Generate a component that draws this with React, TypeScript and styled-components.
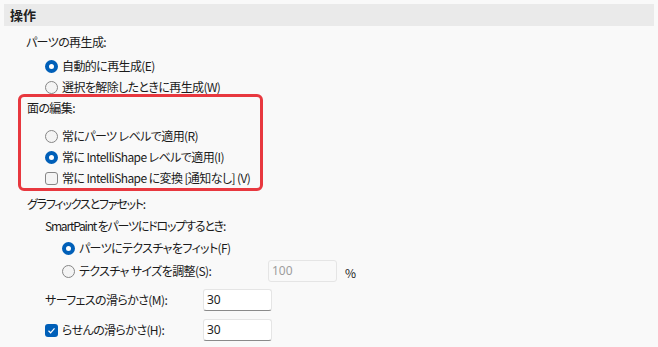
import React from 'react';
import styled, { createGlobalStyle } from 'styled-components';

const GlobalStyle = createGlobalStyle`
  html, body {
    margin: 0;
    padding: 0;
    background: #f9f9f9;
  }
  body {
    font-family: "Noto Sans CJK JP", "Noto Sans", sans-serif;
    font-size: 12px;
    color: #1b1b1b;
    font-feature-settings: "palt";
  }
`;

const Page = styled.div`
  width: 658px;
  height: 347px;
  padding: 4px;
  box-sizing: border-box;
  display: flex;
  flex-direction: column;
  overflow: hidden;
`;

const Header = styled.div`
  height: 22px;
  line-height: 22px;
  background: #eaeaea;
  padding-left: 6px;
  font-weight: 700;
  font-size: 13px;
  color: #222;
  flex-shrink: 0;
`;

const Row = styled.div<{ indent?: number; gap?: number; tall?: boolean; tight?: boolean }>`
  display: flex;
  align-items: center;
  height: ${(p) => (p.tall ? 22 : 16)}px;
  line-height: 16px;
  margin-top: ${(p) => p.gap ?? 5}px;
  padding-left: ${(p) => p.indent ?? 0}px;
  letter-spacing: ${(p) => (p.tight ? '-1.2px' : '-0.6px')};
  white-space: nowrap;
  flex-shrink: 0;
`;

const Highlight = styled.div`
  margin: -1px 0 0 14px;
  width: 245px;
  box-sizing: border-box;
  border: 3px solid #e8383f;
  border-radius: 6px;
  padding: 3px 0 2px 6px;
  display: flex;
  flex-direction: column;
  flex-shrink: 0;
`;

const Radio = styled.span<{ checked?: boolean }>`
  width: 13px;
  height: 13px;
  box-sizing: border-box;
  border-radius: 50%;
  margin-right: 4px;
  flex-shrink: 0;
  background: ${(p) => (p.checked ? '#ffffff' : '#f4f4f4')};
  border: ${(p) => (p.checked ? '4px solid #005fb8' : '1px solid #868686')};
`;

const Box = styled.span<{ checked?: boolean }>`
  width: 13px;
  height: 13px;
  box-sizing: border-box;
  border-radius: 3px;
  margin-right: 4px;
  flex-shrink: 0;
  display: flex;
  align-items: center;
  justify-content: center;
  background: ${(p) => (p.checked ? '#005fb8' : '#f4f4f4')};
  border: ${(p) => (p.checked ? 'none' : '1px solid #868686')};
`;

const Label = styled.span<{ width?: number }>`
  display: inline-block;
  width: ${(p) => (p.width ? `${p.width}px` : 'auto')};
  flex-shrink: 0;
`;

const Field = styled.div<{ disabled?: boolean }>`
  width: 69px;
  height: 22px;
  box-sizing: border-box;
  border: 1px solid #e5e5e5;
  border-bottom-color: ${(p) => (p.disabled ? '#e5e5e5' : '#8a8a8a')};
  border-radius: 3px;
  background: ${(p) => (p.disabled ? '#f9f9f9' : '#ffffff')};
  color: ${(p) => (p.disabled ? '#9d9d9d' : '#1b1b1b')};
  padding-left: 3px;
  line-height: 20px;
  font-family: "Noto Sans", sans-serif;
  font-size: 12px;
  letter-spacing: 0;
`;

const Unit = styled.span`
  margin: 4px 0 0 8px;
  letter-spacing: 0;
`;

const Check = () => (
  <svg width="9" height="9" viewBox="0 0 9 9">
    <path d="M1.5 4.8 L3.6 6.8 L7.5 2.4" fill="none" stroke="#fff" strokeWidth="1.2" />
  </svg>
);

export default function App() {
  return (
    <>
      <GlobalStyle />
      <Page>
        <Header>操作</Header>
        <Row indent={22} gap={8}>パーツの再生成:</Row>
        <Row indent={41} gap={8}>
          <Radio checked />
          自動的に再生成(E)
        </Row>
        <Row indent={41} gap={5}>
          <Radio />
          選択を解除したときに再生成(W)
        </Row>
        <Highlight>
          <Row gap={0}>面の編集:</Row>
          <Row indent={18} gap={12}>
            <Radio />
            常にパーツ レベルで適用(R)
          </Row>
          <Row indent={18} gap={5}>
            <Radio checked />
            常に IntelliShape レベルで適用(I)
          </Row>
          <Row indent={18} gap={5}>
            <Box />
            常に IntelliShape に変換 [通知なし] (V)
          </Row>
        </Highlight>
        <Row indent={23} gap={5} tight>グラフィックスとファセット:</Row>
        <Row indent={41} gap={6} tight>SmartPaint をパーツにドロップするとき:</Row>
        <Row indent={58} gap={6}>
          <Radio checked />
          パーツにテクスチャをフィット(F)
        </Row>
        <Row indent={58} gap={4} tall>
          <Radio />
          <Label width={189}>テクスチャ サイズを調整(S):</Label>
          <Field disabled>100</Field>
          <Unit>%</Unit>
        </Row>
        <Row indent={41} gap={7} tall>
          <Label width={158}>サーフェスの滑らかさ(M):</Label>
          <Field>30</Field>
        </Row>
        <Row indent={41} gap={8} tall>
          <Box checked>
            <Check />
          </Box>
          <Label width={141}>らせんの滑らかさ(H):</Label>
          <Field>30</Field>
        </Row>
      </Page>
    </>
  );
}
